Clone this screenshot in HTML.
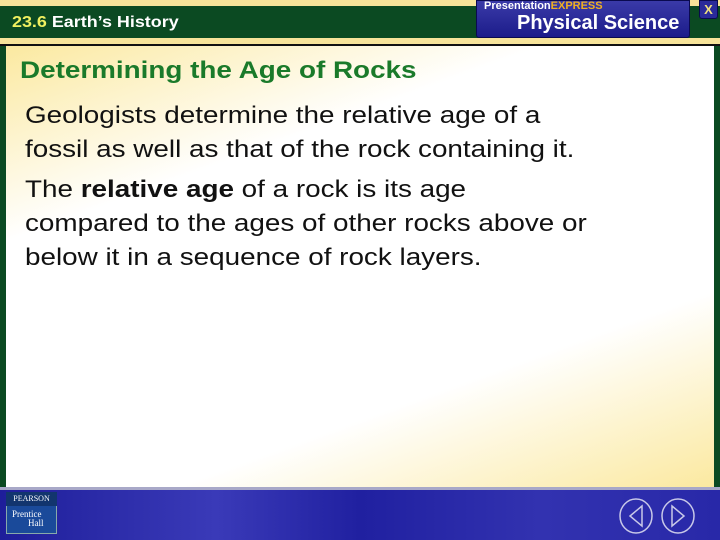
<!DOCTYPE html>
<html><head><style>
*{margin:0;padding:0;box-sizing:border-box}
body{width:720px;height:540px;overflow:hidden;position:relative;background:#0b4a22;font-family:"Liberation Sans",Arial,Helvetica,sans-serif}
.abs{position:absolute}
.sx{transform-origin:left top;white-space:nowrap}
</style></head><body>
<div class="abs" style="left:0;top:0;width:720px;height:6px;background:#f7e49a"></div>
<div class="abs" style="left:0;top:6px;width:720px;height:32px;background:#0b4a22"></div>
<div class="abs sx" style="left:12px;top:14px;font-size:16px;font-weight:bold;color:#fff;transform:scaleX(1.12)"><span style="color:#f0f060">23.6</span> Earth’s History</div>
<div class="abs" style="left:0;top:38px;width:720px;height:6px;background:#f7e49a"></div>
<div class="abs" style="left:0;top:44px;width:720px;height:2px;background:#111"></div>
<div class="abs" style="left:476px;top:0;width:214px;height:38px;background:linear-gradient(#3a3aa8,#1c1c8a);border:1px solid #0a0a50;border-radius:0 0 3px 3px"></div>
<div class="abs sx" style="left:484px;top:0px;font-size:11px;font-weight:bold;color:#fff">Presentation<span style="color:#f0b020">EXPRESS</span></div>
<div class="abs sx" style="left:517px;top:12px;font-size:20px;font-weight:bold;color:#fff">Physical Science</div>
<div class="abs" style="left:699px;top:0;width:19px;height:19px;background:#2a2a9a;border:1px solid #0a0a50;border-radius:0 0 3px 3px;color:#f0e080;font-weight:bold;font-size:13px;text-align:center;line-height:17px">X</div>
<div class="abs" style="left:6px;top:46px;width:708px;height:441px;background:linear-gradient(160deg,#fbe9a0 0%,#fff 28%,#fff 72%,#fbe9a0 100%)"></div>
<div class="abs sx" style="left:20px;top:57px;font-size:24px;font-weight:bold;color:#1a7a2a;transform:scaleX(1.16)">Determining the Age of Rocks</div>
<div class="abs sx" style="left:25px;top:99px;font-size:24px;line-height:34px;color:#111;transform:scaleX(1.16)">
<div style="margin-bottom:6px">Geologists determine the relative age of a<br>fossil as well as that of the rock containing it.</div>
<div>The <b>relative age</b> of a rock is its age<br>compared to the ages of other rocks above or<br>below it in a sequence of rock layers.</div>
</div>
<div class="abs" style="left:0;top:487px;width:720px;height:3px;background:#a8a8c8"></div>
<div class="abs" style="left:0;top:490px;width:720px;height:50px;background:linear-gradient(90deg,#1e1e9a,#3a3ab8 30%,#2020a0 50%,#3232b0 75%,#2828a8)"></div>
<div class="abs" style="left:6px;top:492px;width:51px;height:42px;background:#1a4a9a;border:1px solid #8aa"></div>
<div class="abs" style="left:6px;top:492px;width:51px;height:14px;background:#12356e;color:#fff;font-size:8px;text-align:center;line-height:14px;font-family:'Liberation Serif',serif">PEARSON</div>
<div class="abs" style="left:12px;top:510px;color:#fff;font-size:9px;font-family:'Liberation Serif',serif;line-height:9px">Prentice<br><span style="padding-left:16px">Hall</span></div>
<svg class="abs" style="left:617px;top:497px" width="82" height="38"><g fill="none" stroke="#c8c8e8" stroke-width="1.5"><ellipse cx="19" cy="19" rx="16" ry="17"/><ellipse cx="61" cy="19" rx="16" ry="17"/><path d="M25 9 L13 19 L25 29 Z"/><path d="M55 9 L67 19 L55 29 Z"/></g></svg>
</body></html>
